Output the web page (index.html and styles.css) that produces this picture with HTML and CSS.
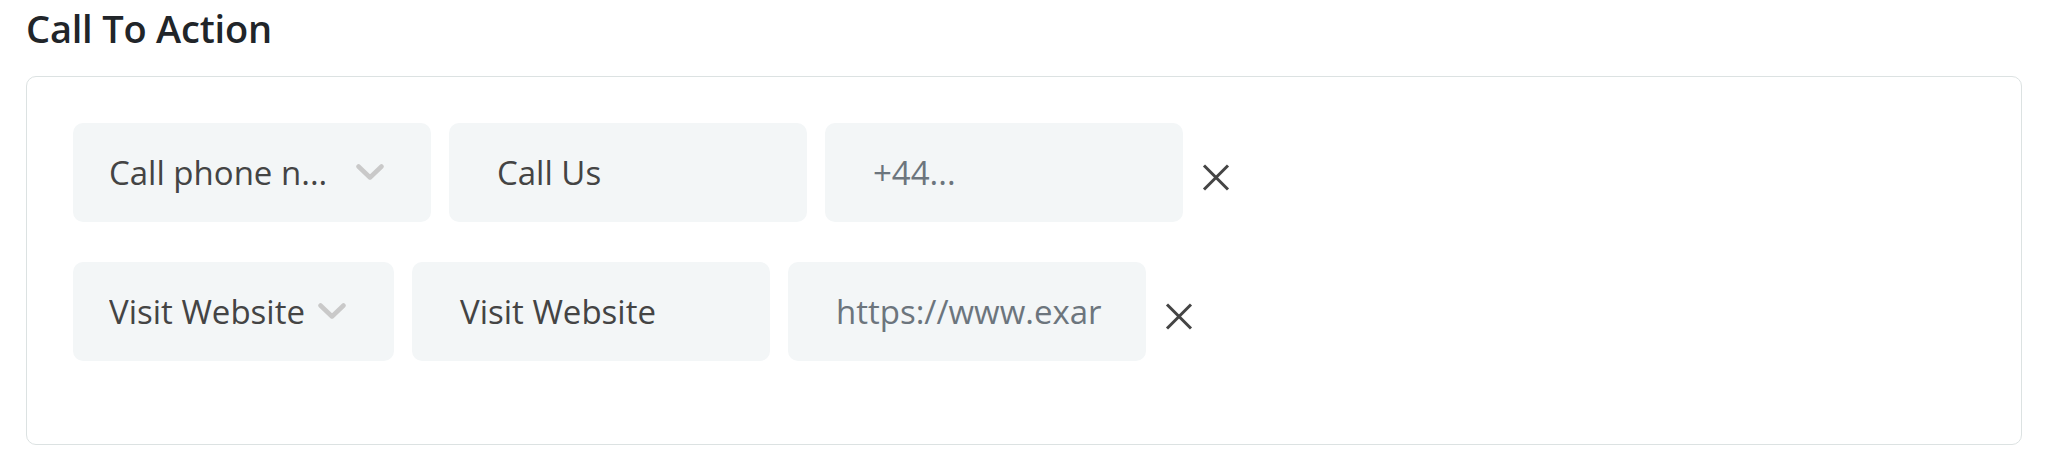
FILE: index.html
```html
<!DOCTYPE html>
<html lang="en">
<head>
<meta charset="utf-8">
<title>Call To Action</title>
<link rel="stylesheet" href="styles.css">
</head>
<body>
<div class="page">
  <h2 class="title">Call To Action</h2>
  <div class="card">
    <div class="cta-row">
      <div class="select select-wide">
        <span class="select-text">Call phone n...</span>
        <svg class="chevron" viewBox="0 0 28 17" aria-hidden="true"><polyline points="2.5,2.5 14,13.5 25.5,2.5"/></svg>
      </div>
      <div class="field"><span class="value">Call Us</span></div>
      <div class="field"><span class="placeholder">+44...</span></div>
      <button class="remove" aria-label="Remove">
        <svg viewBox="0 0 28 27" aria-hidden="true"><line x1="2" y1="1.5" x2="26" y2="25.5"/><line x1="26" y1="1.5" x2="2" y2="25.5"/></svg>
      </button>
    </div>
    <div class="cta-row">
      <div class="select select-narrow">
        <span class="select-text">Visit Website</span>
        <svg class="chevron" viewBox="0 0 28 17" aria-hidden="true"><polyline points="2.5,2.5 14,13.5 25.5,2.5"/></svg>
      </div>
      <div class="field"><span class="value">Visit Website</span></div>
      <div class="field"><span class="placeholder">https://www.exar</span></div>
      <button class="remove" aria-label="Remove">
        <svg viewBox="0 0 28 27" aria-hidden="true"><line x1="2" y1="1.5" x2="26" y2="25.5"/><line x1="26" y1="1.5" x2="2" y2="25.5"/></svg>
      </button>
    </div>
  </div>
</div>
</body>
</html>
```

FILE: styles.css
```css
html, body {
  margin: 0;
  padding: 0;
  background: #ffffff;
}

body {
  font-family: "Open Sans", "Noto Sans", "Liberation Sans", sans-serif;
}

.page {
  padding: 6px 26px 0 26px;
}

.title {
  margin: 0 0 24px 0;
  font-size: 38px;
  line-height: 1.2;
  font-weight: 600;
  color: #212529;
  letter-spacing: -0.2px;
}

.card {
  border: 1px solid #dce2e2;
  border-radius: 10px;
  padding: 46px 46px 83px 46px;
  display: flex;
  flex-direction: column;
  gap: 40px;
}

.cta-row {
  display: flex;
  align-items: center;
  gap: 18px;
}

.select,
.field {
  box-sizing: border-box;
  height: 99px;
  background: #f3f6f7;
  border-radius: 10px;
  display: flex;
  align-items: center;
  font-size: 33px;
  white-space: nowrap;
  overflow: hidden;
  flex: none;
}

.select {
  padding: 0 47px 0 36px;
  gap: 11px;
  color: #444444;
}

.select-wide {
  width: 358px;
  justify-content: space-between;
}

.select-narrow {
  width: 321px;
  gap: 13px;
}

.select-text {
  overflow: hidden;
}

.chevron {
  width: 28px;
  height: 17px;
  flex: none;
  fill: none;
  stroke: #c9c9c9;
  stroke-width: 4.5;
  stroke-linecap: round;
  stroke-linejoin: round;
}

.field {
  width: 358px;
  padding: 0 48px;
}

.value {
  color: #444444;
}

.placeholder {
  color: #6c757d;
}

.remove {
  margin: 11px 0 0 1px;
  padding: 0;
  border: 0;
  background: none;
  width: 28px;
  height: 27px;
  display: flex;
  cursor: pointer;
  flex: none;
}

.remove svg {
  width: 28px;
  height: 27px;
  stroke: #444444;
  stroke-width: 3;
  fill: none;
}
```
